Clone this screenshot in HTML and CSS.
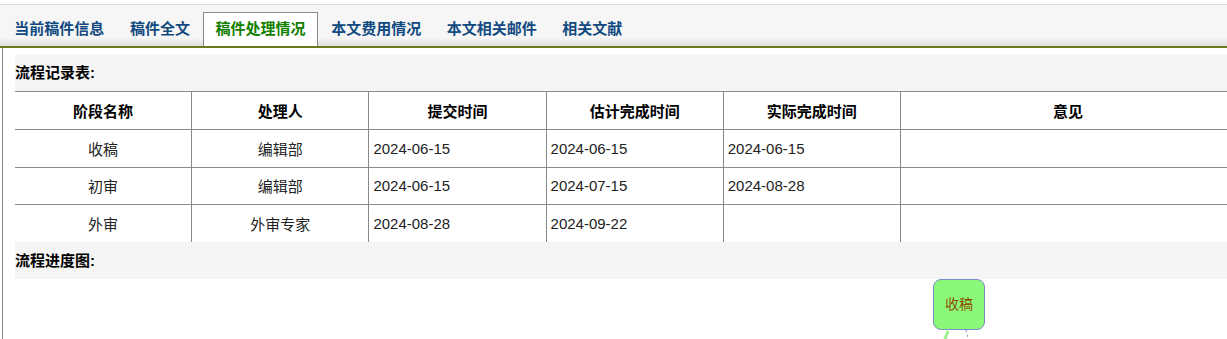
FILE: index.html
```html
<!DOCTYPE html>
<html lang="zh-CN">
<head>
  <meta charset="UTF-8" />
  <meta name="viewport" content="width=device-width, initial-scale=1.0"/>
  <title>稿件处理情况</title>
  <link rel="stylesheet" href="styles.css">
</head>
<body>
  <div class="page">
    <ul class="tabs">
      <li>当前稿件信息</li>
      <li>稿件全文</li>
      <li class="active">稿件处理情况</li>
      <li>本文费用情况</li>
      <li>本文相关邮件</li>
      <li>相关文献</li>
    </ul>

    <div class="panel">
      <div class="section-title">流程记录表:</div>
      <table class="flow-table">
        <tr>
          <th>阶段名称</th>
          <th>处理人</th>
          <th>提交时间</th>
          <th>估计完成时间</th>
          <th>实际完成时间</th>
          <th class="opinion">意见</th>
        </tr>
        <tr>
          <td class="center">收稿</td>
          <td class="center">编辑部</td>
          <td>2024-06-15</td>
          <td>2024-06-15</td>
          <td>2024-06-15</td>
          <td></td>
        </tr>
        <tr>
          <td class="center">初审</td>
          <td class="center">编辑部</td>
          <td>2024-06-15</td>
          <td>2024-07-15</td>
          <td>2024-08-28</td>
          <td></td>
        </tr>
        <tr>
          <td class="center">外审</td>
          <td class="center">外审专家</td>
          <td>2024-08-28</td>
          <td>2024-09-22</td>
          <td></td>
          <td></td>
        </tr>
      </table>

      <div class="section-title">流程进度图:</div>
      <div class="flow-chart">
        <div class="node">收稿</div>
        <svg class="links" width="60" height="12" viewBox="0 0 60 12">
          <line x1="15" y1="1" x2="11" y2="12" stroke="#9cf28c" stroke-width="3"/>
          <line x1="33" y1="0" x2="36" y2="12" stroke="#7a8cc8" stroke-width="1" stroke-dasharray="2 3"/>
        </svg>
      </div>
    </div>
  </div>
</body>
</html>
```

FILE: styles.css
```css
html, body {
  margin: 0;
  overflow: hidden;
}
body {
  font-family: "Liberation Sans", "Noto Sans CJK SC", sans-serif;
  font-size: 15px;
  color: #222;
  background: #fff;
}
.page {
  width: 1240px;
  padding-top: 4px;
}
.tabs {
  display: flex;
  align-items: flex-end;
  list-style: none;
  margin: 0;
  padding: 0 0 0 1.5px;
  height: 41px;
  border-top: 1px solid #dcdcdc;
  border-bottom: 2px solid #6b7a22;
  background: linear-gradient(#f6f6f6 0, #f6f6f6 80%, #dedede 100%);
}
.tabs li {
  padding: 0 11.8px;
  height: 33px;
  line-height: 32px;
  font-weight: bold;
  color: #124a80;
  border: 1px solid transparent;
  border-bottom: none;
  white-space: nowrap;
}
.tabs li.active {
  background: #fff;
  border-color: #888;
  color: #118000;
}
.panel {
  margin-left: 2px;
  border-left: 1px solid #888;
  padding: 6px 0 0 12px;
}
.section-title {
  height: 37px;
  line-height: 37px;
  background: #f5f5f5;
  font-weight: bold;
  color: #000;
}
.flow-table {
  width: 1220px;
  border-collapse: collapse;
  table-layout: fixed;
}
.flow-table th,
.flow-table td {
  height: 36.6px;
  padding: 0 4px;
  border-top: 1px solid #888;
  border-left: 1px solid #888;
  text-align: left;
}
.flow-table th:first-child,
.flow-table td:first-child {
  border-left: none;
}
.flow-table th {
  height: 37px;
  text-align: center;
  color: #000;
  width: 168.2px;
}
.flow-table th.opinion {
  width: auto;
}
.flow-table td.center {
  text-align: center;
}
.flow-chart {
  position: relative;
  height: 70px;
}
.node {
  position: absolute;
  left: 918px;
  top: 0;
  width: 50px;
  height: 49px;
  border: 1px solid #7a8cc8;
  border-radius: 8px;
  background: #8cf87a;
  color: #8a5200;
  font-size: 14px;
  line-height: 49px;
  text-align: center;
}
.links {
  position: absolute;
  left: 918px;
  top: 51px;
}
```
